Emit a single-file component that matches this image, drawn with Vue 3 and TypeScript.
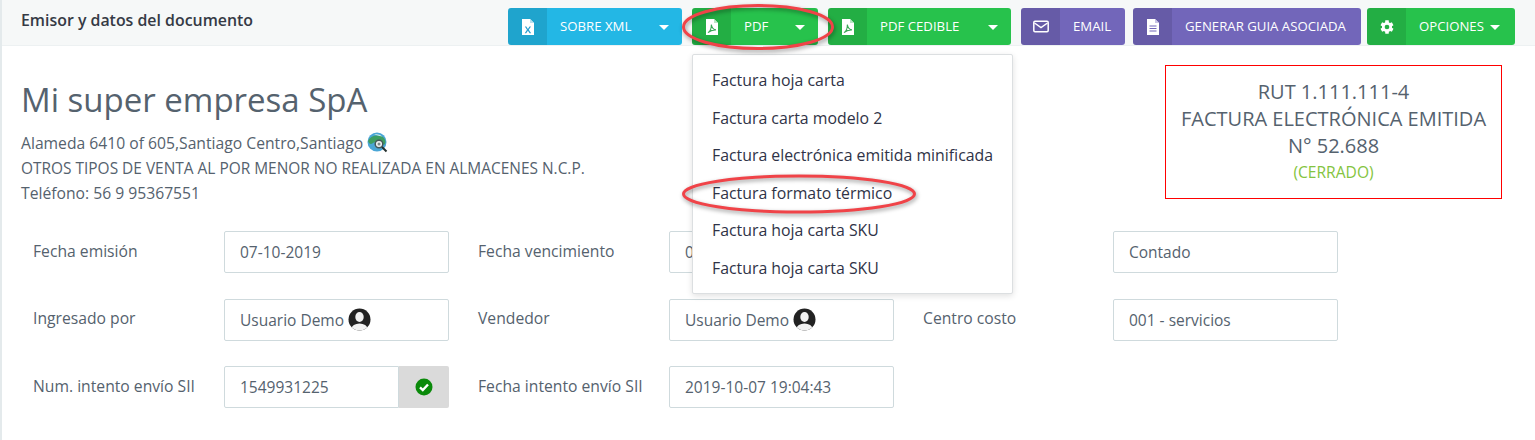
<template>
  <div class="page">
    <header class="head">
      <h1 class="head-title">Emisor y datos del documento</h1>
      <div class="actions">
        <button v-for="b in buttons" :key="b.label" class="btn" :class="[b.color, b.cls]">
          <span class="btn-icon">
            <svg v-if="b.icon === 'xml'" width="14" height="16" viewBox="0 0 14 16">
              <path d="M1 0h8l4 4v12H1z" fill="#fff" />
              <path d="M9 0v4h4z" fill="#b8dfee" />
              <path d="M3.800 7.400 6 10.800l-2.300 3.400h1.500L6.900 11.700l1.700 2.500h1.600L7.800 10.800l2.200-3.400H8.500L6.900 9.900 5.300 7.400z" fill="#2a9fd0" />
            </svg>
            <svg v-else-if="b.icon === 'pdf'" width="14" height="16" viewBox="0 0 14 16">
              <path d="M1 0h8l4 4v12H1z" fill="#fff" />
              <path d="M9 0v4h4z" fill="#b9e6c4" />
              <path d="M3 13.600c2-1.300 3.500-4.400 3.300-8 .6 3 2.200 5 4.700 5.300-2.800-.2-5.800.7-8 2.700z" fill="none" stroke="#3aa856" stroke-width="1.100" />
            </svg>
            <svg v-else-if="b.icon === 'mail'" width="16" height="13" viewBox="0 0 16 13">
              <rect x=".8" y="1.300" width="14.400" height="10.400" rx="1.200" fill="none" stroke="#fff" stroke-width="1.500" />
              <path d="M1.500 3 8 7.600 14.500 3" fill="none" stroke="#fff" stroke-width="1.500" />
            </svg>
            <svg v-else-if="b.icon === 'doc'" width="14" height="16" viewBox="0 0 14 16">
              <path d="M1 0h8l4 4v12H1z" fill="#fff" />
              <path d="M9 0v4h4z" fill="#c9c4e6" />
              <path d="M3.500 7h7M3.500 9.500h7M3.500 12h7" stroke="#7266ba" stroke-width="1.100" />
            </svg>
            <svg v-else width="16" height="16" viewBox="0 0 24 24">
              <path
                d="M19.400 13c.1-.3.1-.7.1-1s0-.7-.1-1l2.300-1.800-2.400-4.200-2.700 1.100c-.5-.4-1.100-.8-1.700-1L14.500 2h-5l-.4 3.100c-.6.200-1.200.6-1.700 1L4.700 5 2.300 9.200 4.600 11c-.1.300-.1.700-.1 1s0 .7.100 1l-2.300 1.800 2.400 4.200 2.700-1.100c.5.400 1.100.8 1.700 1l.4 3.100h5l.4-3.100c.6-.2 1.200-.6 1.700-1l2.700 1.100 2.400-4.200zM12 15.500a3.500 3.500 0 1 1 0-7 3.500 3.500 0 0 1 0 7z"
                fill="#fff"
              />
            </svg>
          </span>
          <span class="btn-label">{{ b.label }}</span>
          <span v-if="b.caret" class="caret"></span>
        </button>
      </div>
    </header>

    <section class="company">
      <div class="company-info">
        <h2 class="company-name">Mi super empresa SpA</h2>
        <p class="company-line">
          Alameda 6410 of 605,Santiago Centro,Santiago
          <svg class="globe" width="21" height="21" viewBox="0 0 21 21">
            <circle cx="10" cy="10" r="9.500" fill="#4aa6d6" />
            <path d="M1 9c3-6 11-7 16-3 2 3 2 5 0 7-3-4-8-4-11-2-2 2-4 1-5-2z" fill="#3d9e62" />
            <path d="M7 2.500c3-.8 6 0 8 2-3-1-5-1-8-2z" fill="#d8efe6" />
            <circle cx="12" cy="12" r="3.800" fill="#eef2f2" stroke="#46585a" stroke-width="1.500" />
            <circle cx="12" cy="12" r="1.500" fill="#7c8a8a" />
            <path d="m15 15 4.500 4.500" stroke="#25302f" stroke-width="2" />
          </svg>
        </p>
        <p class="company-line caps">OTROS TIPOS DE VENTA AL POR MENOR NO REALIZADA EN ALMACENES N.C.P.</p>
        <p class="company-line">Teléfono: 56 9 95367551</p>
      </div>
      <div class="doc-box">
        <div>RUT 1.111.111-4</div>
        <div>FACTURA ELECTRÓNICA EMITIDA</div>
        <div>N° 52.688</div>
        <div class="doc-status">(CERRADO)</div>
      </div>
    </section>

    <section class="form">
      <div v-for="f in fields" :key="f.label" class="field">
        <span class="field-label">{{ f.label }}</span>
        <div class="field-input" :class="{ joined: f.check }">
          <span>{{ f.value }}</span>
          <svg v-if="f.user" class="avatar" width="23" height="23" viewBox="0 0 23 23">
            <defs>
              <clipPath id="avatar-clip"><circle cx="11.500" cy="11.500" r="11" /></clipPath>
            </defs>
            <circle cx="11.500" cy="11.500" r="11" fill="#222" />
            <g clip-path="url(#avatar-clip)">
              <ellipse cx="11.500" cy="9" rx="4.200" ry="5" fill="#f2f2f2" />
              <ellipse cx="11.500" cy="21" rx="8" ry="5.500" fill="#f2f2f2" />
            </g>
          </svg>
        </div>
        <span v-if="f.check" class="field-addon">
          <svg width="18" height="18" viewBox="0 0 18 18">
            <circle cx="9" cy="9" r="8.500" fill="#0a8a0a" />
            <path d="m5 9.300 2.800 2.700L13 6.500" fill="none" stroke="#fff" stroke-width="2.400" />
          </svg>
        </span>
      </div>
    </section>

    <ul class="menu">
      <li v-for="(item, i) in menuItems" :key="i">{{ item }}</li>
    </ul>

    <svg class="mark mark-pdf" width="156" height="52" viewBox="0 0 156 52">
      <ellipse cx="78" cy="25" rx="74.500" ry="21.500" />
    </svg>
    <svg class="mark mark-term" width="238" height="44" viewBox="0 0 238 44">
      <ellipse cx="119" cy="20" rx="115.500" ry="18" />
    </svg>
  </div>
</template>

<script setup lang="ts">
interface ActionButton {
  label: string
  icon: 'xml' | 'pdf' | 'mail' | 'doc' | 'gear'
  color: string
  cls: string
  caret?: boolean
}

interface Field {
  label: string
  value: string
  user?: boolean
  check?: boolean
}

const buttons: ActionButton[] = [
  { label: 'SOBRE XML', icon: 'xml', color: 'blue', cls: 'w-xml', caret: true },
  { label: 'PDF', icon: 'pdf', color: 'green', cls: 'w-pdf', caret: true },
  { label: 'PDF CEDIBLE', icon: 'pdf', color: 'green', cls: 'w-cedible', caret: true },
  { label: 'EMAIL', icon: 'mail', color: 'purple', cls: 'w-email' },
  { label: 'GENERAR GUIA ASOCIADA', icon: 'doc', color: 'purple', cls: 'w-guia' },
  { label: 'OPCIONES', icon: 'gear', color: 'green', cls: 'w-opciones', caret: true },
]

const fields: Field[] = [
  { label: 'Fecha emisión', value: '07-10-2019' },
  { label: 'Fecha vencimiento', value: '07-10-2019' },
  { label: 'Forma pago', value: 'Contado' },
  { label: 'Ingresado por', value: 'Usuario Demo', user: true },
  { label: 'Vendedor', value: 'Usuario Demo', user: true },
  { label: 'Centro costo', value: '001 - servicios' },
  { label: 'Num. intento envío SII', value: '1549931225', check: true },
  { label: 'Fecha intento envío SII', value: '2019-10-07 19:04:43' },
]

const menuItems = [
  'Factura hoja carta',
  'Factura carta modelo 2',
  'Factura electrónica emitida minificada',
  'Factura formato térmico',
  'Factura hoja carta SKU',
  'Factura hoja carta SKU',
]
</script>

<style>
body {
  background: #fff;
}
</style>

<style scoped>
.page {
  position: relative;
  width: 1535px;
  height: 440px;
  overflow: hidden;
  box-sizing: border-box;
  border-left: 2px solid #e4eaec;
  background: #fff;
  color: #55626e;
  font-family: "Open Sans", "Liberation Sans", sans-serif;
  font-size: 15.700px;
}

.head {
  display: flex;
  justify-content: space-between;
  height: 46px;
  box-sizing: border-box;
  padding-left: 19px;
  padding-right: 20px;
  padding-top: 8px;
  background: #f6f8f8;
  border-bottom: 1px solid #edf1f2;
}

.head-title {
  margin: 2px 0 0;
  font-size: 15.900px;
  line-height: 20px;
  font-weight: 600;
  color: #353a45;
}

.actions {
  display: flex;
}

.btn {
  display: flex;
  align-items: center;
  height: 37px;
  padding: 0;
  border: 0;
  border-radius: 3px;
  overflow: hidden;
  color: #fff;
  font-family: inherit;
  font-size: 13.200px;
  cursor: pointer;
}

.btn-icon {
  display: flex;
  flex: none;
  align-items: center;
  justify-content: center;
  width: 39px;
  height: 100%;
  background: rgba(0, 0, 0, 0.1);
}

.btn-label {
  flex: 1;
  padding-left: 13px;
  padding-bottom: 2px;
  text-align: left;
  white-space: nowrap;
}

.caret {
  flex: none;
  width: 0;
  height: 0;
  margin-top: 2px;
  margin-right: 13px;
  border-left: 5px solid transparent;
  border-right: 5px solid transparent;
  border-top: 5px solid #fff;
}

.blue { background: #23b7e5; }
.green { background: #27c24c; }
.purple { background: #7266ba; }

.w-xml { width: 174px; }
.w-pdf { width: 126px; margin-left: 10px; }
.w-cedible { width: 183px; margin-left: 10px; }
.w-email { width: 104px; margin-left: 10px; }
.w-guia { width: 228px; margin-left: 8px; }
.w-opciones { width: 148px; margin-left: 6px; }
.w-opciones .caret { margin-left: 6px; }
.w-opciones .btn-label { flex: none; }

.company {
  display: flex;
  justify-content: space-between;
  padding-left: 19px;
  padding-right: 33px;
}

.company-name {
  margin: 31px 0 7px;
  font-size: 33px;
  line-height: 46px;
  font-weight: 400;
}

.company-line {
  display: flex;
  align-items: center;
  gap: 4px;
  margin: 0;
  height: 25px;
}

.company-line.caps {
  font-size: 15.450px;
}

.globe {
  flex: none;
}

.doc-box {
  box-sizing: border-box;
  width: 337px;
  height: 134px;
  margin-top: 19px;
  padding-top: 12px;
  border: 1px solid #f00;
  text-align: center;
  font-size: 20px;
  line-height: 27px;
}

.doc-status {
  font-size: 15.600px;
  color: #84c440;
}

.form {
  display: grid;
  grid-template-columns: repeat(3, 416px);
  column-gap: 29px;
  row-gap: 25.500px;
  padding-left: 31px;
  margin-top: 26px;
}

.field {
  display: flex;
  align-items: center;
  height: 42px;
}

.field:nth-child(3n) .field-label {
  width: 190px;
}

.field-label {
  flex: none;
  width: 191px;
  margin-top: -3px;
}

.field-input {
  display: flex;
  align-items: center;
  gap: 4px;
  box-sizing: border-box;
  width: 225px;
  height: 100%;
  padding: 0 15px;
  border: 1px solid #cfdadd;
  border-radius: 2px;
  font-size: 15.500px;
}

.field-input.joined {
  width: 175px;
  border-radius: 2px 0 0 2px;
}

.field-addon {
  display: flex;
  flex: none;
  align-items: center;
  justify-content: center;
  width: 50px;
  height: 100%;
  border-radius: 0 2px 2px 0;
  background: #dadada;
}

.avatar {
  flex: none;
}

.menu {
  position: absolute;
  top: 54px;
  left: 690px;
  width: 321px;
  box-sizing: border-box;
  margin: 0;
  padding: 7px 0 6px;
  list-style: none;
  background: #fff;
  border: 1px solid #dcdfe1;
  border-radius: 2px;
  box-shadow: 0 2px 6px rgba(0, 0, 0, 0.12);
  color: #2f3347;
  font-size: 15.850px;
}

.menu li {
  padding: 0 19px;
  height: 37.500px;
  line-height: 37.500px;
  white-space: nowrap;
}

.mark {
  position: absolute;
  overflow: visible;
  filter: drop-shadow(1px 2px 2px rgba(0, 0, 0, 0.4));
}

.mark ellipse {
  fill: none;
  stroke: #f04348;
  stroke-width: 3;
}

.mark-pdf {
  top: 2px;
  left: 678px;
}

.mark-term {
  top: 174px;
  left: 678px;
}
</style>
